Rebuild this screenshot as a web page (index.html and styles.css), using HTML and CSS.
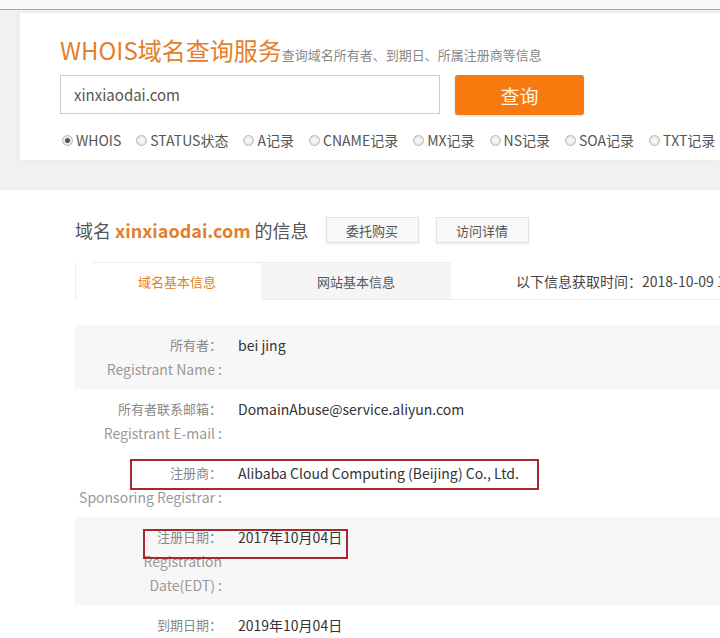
FILE: index.html
```html
<!DOCTYPE html>
<html lang="zh-CN">
<head>
    <meta charset="UTF-8">
    <meta name="viewport" content="width=device-width, initial-scale=1.0">
    <title>WHOIS域名查询</title>
    <link rel="stylesheet" href="styles.css">
</head>
<body>

<div class="topbar"></div>

<div class="search-wrap">
    <div class="search-card">
        <h1 class="title">WHOIS域名查询服务<span class="sub">查询域名所有者、到期日、所属注册商等信息</span></h1>
        <div class="search-row">
            <input type="text" class="search-input" value="xinxiaodai.com">
            <button class="search-btn">查询</button>
        </div>
        <div class="types">
            <label class="type"><span class="radio checked"></span>WHOIS</label>
            <label class="type"><span class="radio"></span>STATUS状态</label>
            <label class="type"><span class="radio"></span>A记录</label>
            <label class="type"><span class="radio"></span>CNAME记录</label>
            <label class="type"><span class="radio"></span>MX记录</label>
            <label class="type"><span class="radio"></span>NS记录</label>
            <label class="type"><span class="radio"></span>SOA记录</label>
            <label class="type"><span class="radio"></span>TXT记录</label>
        </div>
    </div>
</div>

<div class="result">
    <div class="result-head">
        <h2>域名 <b>xinxiaodai.com</b> 的信息</h2>
        <button class="ghost-btn">委托购买</button>
        <button class="ghost-btn">访问详情</button>
    </div>

    <div class="tabs">
        <div class="tab active">域名基本信息</div>
        <div class="tab">网站基本信息</div>
        <div class="fetch-time">以下信息获取时间：2018-10-09 14:32</div>
    </div>

    <div class="info">
        <div class="info-row shaded">
            <div class="label"><span class="cn">所有者：</span><span class="en">Registrant Name :</span></div>
            <div class="value">bei jing</div>
        </div>
        <div class="info-row">
            <div class="label"><span class="cn">所有者联系邮箱：</span><span class="en">Registrant E-mail :</span></div>
            <div class="value">DomainAbuse@service.aliyun.com</div>
        </div>
        <div class="info-row">
            <div class="label"><span class="cn">注册商：</span><span class="en">Sponsoring Registrar :</span></div>
            <div class="value">Alibaba Cloud Computing (Beijing) Co., Ltd.</div>
            <div class="mark mark-registrar"></div>
        </div>
        <div class="info-row shaded">
            <div class="label"><span class="cn">注册日期：</span><span class="en">Registration Date(EDT) :</span></div>
            <div class="value">2017年10月04日</div>
            <div class="mark mark-date"></div>
        </div>
        <div class="info-row">
            <div class="label"><span class="cn">到期日期：</span></div>
            <div class="value">2019年10月04日</div>
        </div>
    </div>
</div>

</body>
</html>
```

FILE: styles.css
```css
body {
    margin: 0;
    font-family: "Noto Sans CJK SC", sans-serif;
    background: #fff;
    color: #333;
    overflow: hidden;
}
.topbar {
    height: 9px;
    background: #fafafa;
    border-bottom: 1px solid #a8a8a8;
}
.search-wrap {
    background: #f1f1f1;
    padding: 3px 0 30px 20px;
}
.search-card {
    background: #fff;
    height: 147px;
    box-sizing: border-box;
    padding: 21px 0 0 40px;
    box-shadow: -2px 0 6px rgba(0, 0, 0, 0.04);
}
.title {
    margin: 0;
    height: 32px;
    font-size: 24px;
    line-height: 32px;
    font-weight: normal;
    color: #e2802e;
    white-space: nowrap;
}
.title .sub {
    font-size: 13px;
    line-height: 1;
    color: #888;
}
.search-row {
    display: flex;
    gap: 15px;
    margin-top: 9px;
}
.search-input {
    width: 380px;
    height: 39px;
    box-sizing: border-box;
    border: 1px solid #ccc;
    padding: 0 13px;
    font-family: inherit;
    font-size: 15px;
    color: #555;
    outline: none;
}
.search-btn {
    width: 129px;
    height: 40px;
    border: none;
    border-radius: 3px;
    background: #f67a0d;
    color: #fff6e6;
    font-family: inherit;
    font-size: 19px;
    box-shadow: 0 1px 2px rgba(0, 0, 0, 0.15);
}
.types {
    display: flex;
    gap: 13px;
    margin-top: 15px;
    line-height: 20px;
    font-size: 14px;
    color: #555;
    white-space: nowrap;
}
.type {
    display: flex;
    align-items: center;
}
.radio {
    width: 11px;
    height: 11px;
    box-sizing: border-box;
    border: 1px solid #b8b8b8;
    border-radius: 50%;
    margin: 0 3px 0 2px;
    background: radial-gradient(circle, #f6f6f6 30%, #d6d6d6 100%);
    position: relative;
}
.radio.checked::after {
    content: "";
    position: absolute;
    left: 2px;
    top: 2px;
    width: 5px;
    height: 5px;
    border-radius: 50%;
    background: #555;
}
.result {
    padding: 27px 0 0 75px;
}
.result-head {
    display: flex;
    align-items: center;
    height: 26px;
}
.result-head h2 {
    margin: 0 17px 0 0;
    font-size: 18px;
    font-weight: normal;
    color: #555;
    white-space: nowrap;
}
.result-head b {
    color: #e2802e;
}
.ghost-btn {
    width: 93px;
    height: 26px;
    margin-right: 17px;
    border: 1px solid #e2e2e2;
    background: #f8f8f8;
    font-family: inherit;
    font-size: 13px;
    color: #555;
    box-shadow: 0 1px 2px rgba(0, 0, 0, 0.08);
}
.tabs {
    display: flex;
    align-items: center;
    height: 38px;
    margin-top: 19px;
    padding-left: 17px;
    border-left: 1px solid #eee;
    white-space: nowrap;
}
.tab {
    flex-shrink: 0;
    height: 38px;
    line-height: 38px;
    text-align: center;
    font-size: 13px;
    color: #555;
    box-sizing: border-box;
    border-top: 1px solid #eee;
}
.tab.active {
    width: 168px;
    color: #e2802e;
}
.tab + .tab {
    width: 190px;
    background: #f5f5f5;
    border-bottom: 1px solid #eee;
}
.fetch-time {
    align-self: stretch;
    flex-shrink: 0;
    padding-left: 65px;
    line-height: 38px;
    font-size: 14px;
    color: #444;
    border-bottom: 1px solid #eee;
}
.info {
    margin-top: 25px;
}
.info-row {
    position: relative;
    display: grid;
    grid-template-columns: 147px 1fr;
    column-gap: 16px;
    padding: 8px 0;
    line-height: 24px;
}
.info-row.shaded {
    background: #f7f7f7;
}
.label {
    text-align: right;
    color: #999;
}
.label .cn {
    display: block;
    font-size: 13px;
    color: #888;
}
.label .en {
    display: block;
    font-size: 14px;
}
.value {
    font-size: 14px;
    color: #333;
}
.mark {
    position: absolute;
    border: 2px solid #a8262d;
    box-sizing: border-box;
}
.mark-registrar {
    left: 55px;
    top: 6px;
    width: 409px;
    height: 31px;
}
.mark-date {
    left: 68px;
    top: 12px;
    width: 205px;
    height: 30px;
}
```
